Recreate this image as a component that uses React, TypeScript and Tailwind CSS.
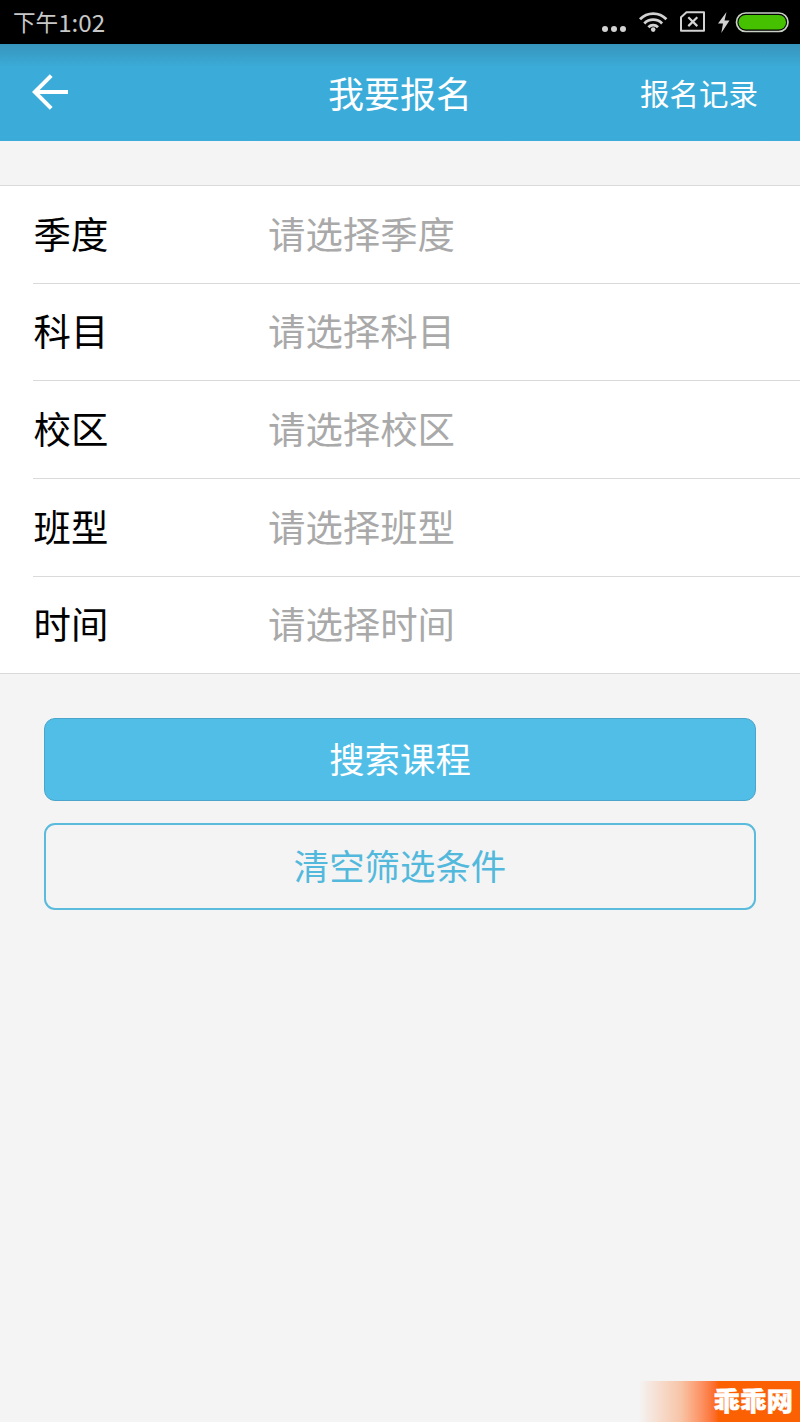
type Field = {
  label: string;
  placeholder: string;
  height: string;
};

const fields: Field[] = [
  { label: "季度", placeholder: "请选择季度", height: "h-[98px]" },
  { label: "科目", placeholder: "请选择科目", height: "h-[97px]" },
  { label: "校区", placeholder: "请选择校区", height: "h-[98px]" },
  { label: "班型", placeholder: "请选择班型", height: "h-[98px]" },
  { label: "时间", placeholder: "请选择时间", height: "h-[96px]" },
];

function StatusBar() {
  return (
    <div className="flex h-11 items-center justify-between bg-black pl-[13px] text-[#c8c8c8]">
      <span className="flex items-center leading-none">
        <span className="text-[22.6px]">下午</span>
        <span className="text-[24.2px]">1:02</span>
      </span>
      <svg width="210" height="44" viewBox="0 0 210 44" fill="none">
        {/* Signal dots */}
        <g fill="#d2d2d2">
          <circle cx="15" cy="29" r="3" />
          <circle cx="24" cy="29" r="3" />
          <circle cx="33" cy="29" r="3" />
        </g>

        {/* Wifi */}
        <g stroke="#d2d2d2" strokeWidth="2.8">
          <path d="M50 19.3a18.3 18.3 0 0 1 26.4 0" />
          <path d="M54.3 23.4a12.6 12.6 0 0 1 17.8 0" />
          <path d="M58.4 27.2a6.8 6.8 0 0 1 9.6 0" />
        </g>
        <circle cx="63.2" cy="29.6" r="2.3" fill="#d2d2d2" />

        {/* No sim */}
        <path
          d="M96.5 12.2H114v18.6H91V17.2z"
          stroke="#d2d2d2"
          strokeWidth="2"
          strokeLinejoin="round"
        />
        <path
          d="M98.3 17.3l9 8.8M107.3 17.3l-9 8.8"
          stroke="#d2d2d2"
          strokeWidth="2.2"
        />

        {/* Battery */}
        <path d="M136.5 12L128 23.5h5L131.3 33 139.5 20.5h-5z" fill="#d2d2d2" />
        <rect
          x="146.5"
          y="13"
          width="51.5"
          height="18.5"
          rx="9.2"
          stroke="#c8d0c4"
          strokeWidth="1.7"
        />
        <rect x="148.5" y="15" width="47.5" height="14.5" rx="7.2" fill="#45c100" />
      </svg>
    </div>
  );
}

function Header() {
  return (
    <header className="grid h-[96.5px] grid-cols-3 items-center bg-linear-to-b from-[#3795bd] to-[#3bacd9] to-25% text-white">
      <button className="w-fit pl-8">
        <svg width="37" height="36" viewBox="0 0 37 36" fill="none">
          <path
            d="M19.2 1.6L2.8 18l16.4 16.4M2.8 18H36"
            stroke="currentColor"
            strokeWidth="4"
          />
        </svg>
      </button>
      <h1 className="text-center text-[36px] leading-none">我要报名</h1>
      <button className="pr-[42px] text-right text-[29.5px] leading-none">
        报名记录
      </button>
    </header>
  );
}

export default function App() {
  return (
    <div className="flex min-h-[1422px] w-[800px] flex-col bg-[#f4f4f4] font-['Noto_Sans_CJK_SC','Noto_Sans',sans-serif]">
      <StatusBar />
      <Header />

      {/* Filters */}
      <section className="mt-[44.5px] border-y border-[#dadada] bg-white pl-[33px]">
        {fields.map((field) => (
          <div
            key={field.label}
            className={`${field.height} flex items-center border-b border-[#dadada] pb-0.5 text-[37.4px] leading-none last:border-b-0`}
          >
            <span className="w-[235px] pl-[0.5px] text-black">{field.label}</span>
            <span className="text-[#a9a9a9]">{field.placeholder}</span>
          </div>
        ))}
      </section>

      {/* Actions */}
      <div className="flex flex-col gap-[22px] px-11 pt-11 text-[35.4px] leading-none">
        <button className="h-[83px] rounded-[11px] border border-[#4ba5ca] bg-[#51bee8] pb-[3px] text-white">
          搜索课程
        </button>
        <button className="h-[87px] rounded-[11px] border-2 border-[#5abbdc] pb-1 text-[#53b9dc]">
          清空筛选条件
        </button>
      </div>

      {/* Site mark */}
      <footer className="mt-auto flex h-[41px] w-[170px] items-center justify-end self-end bg-linear-to-r from-[#f4f4f4] from-5% via-[#f7c4a6] via-30% to-[#fb6003] to-52% pr-[7px] pb-0.5">
        <span className="text-[26.5px] leading-none font-black text-white [-webkit-text-stroke:0.4px_white]">
          乖乖网
        </span>
      </footer>
    </div>
  );
}
